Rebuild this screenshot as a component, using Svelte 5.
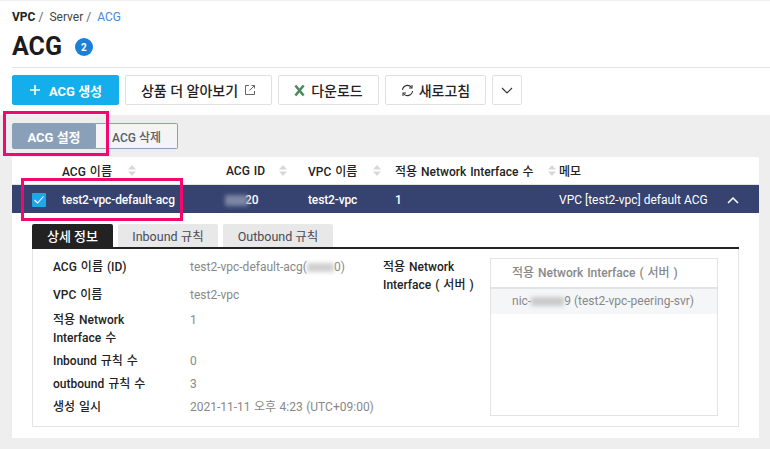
<script>
  const columns = [
    { label: 'ACG 이름', sort: true },
    { label: 'ACG ID', sort: true },
    { label: 'VPC 이름', sort: true },
    { label: '적용 Network Interface 수', sort: true },
    { label: '메모', sort: false }
  ];
  const tabs = ['상세 정보', 'Inbound 규칙', 'Outbound 규칙'];
</script>

<div class="page">
  <header class="top">
    <nav class="crumbs">
      <b>VPC</b><i>/</i><span>Server</span><i>/</i><span class="here">ACG</span>
    </nav>
    <div class="title">
      <h1>ACG</h1>
      <span class="count">2</span>
    </div>
  </header>

  <div class="toolbar">
    <button class="btn create">
      <svg width="12" height="12" viewBox="0 0 12 12"><path d="M6 1v10M1 6h10" stroke="#fff" stroke-width="1.6" fill="none" /></svg>
      <span>ACG 생성</span>
    </button>
    <button class="btn learn">
      <span>상품 더 알아보기</span>
      <svg width="12" height="12" viewBox="0 0 12 12" fill="none" stroke="#666" stroke-width="1"><path d="M5 1.5H1.5v9h9V7" /><path d="M5.5 6.500 10.500 1.500M7.500 1.500h3v3" /></svg>
    </button>
    <button class="btn download">
      <svg width="11" height="13" viewBox="0 0 12 13" fill="none" stroke="#4c8a5c" stroke-width="2.8"><path d="M1.500 1 10.500 12M10.500 1 1.500 12" /></svg>
      <span>다운로드</span>
    </button>
    <button class="btn refresh">
      <svg width="13" height="13" viewBox="0 0 13 13" fill="none" stroke="#333" stroke-width="1.1"><path d="M1.500 6A5 5 0 0 1 10.500 3.500" /><path d="M11.500 7A5 5 0 0 1 2.500 9.500" /><path d="M11 1v3H8M2 12V9h3" /></svg>
      <span>새로고침</span>
    </button>
    <button class="btn more">
      <svg width="12" height="7" viewBox="0 0 12 7" fill="none" stroke="#333" stroke-width="1.1"><path d="M1 1l5 5 5-5" /></svg>
    </button>
  </div>

  <main class="work">
    <div class="actions">
      <button class="act on">ACG 설정</button>
      <button class="act">ACG 삭제</button>
    </div>

    <section class="card">
      <div class="grid head">
        <span></span>
        {#each columns as col}
          <span class="th">
            <span class="th-label">{col.label}</span>
            {#if col.sort}
              <svg class="sort" width="8" height="11" viewBox="0 0 8 11" fill="#d6d8db"><path d="M4 0l4 4.500H0zM4 11 0 6.500h8z" /></svg>
            {/if}
          </span>
        {/each}
      </div>

      <div class="grid row">
        <span class="check">
          <svg width="10" height="8" viewBox="0 0 10 8" fill="none" stroke="#fff" stroke-width="1.1"><path d="M.5 4l3 3 6-6.500" /></svg>
        </span>
        <span class="name">test2-vpc-default-acg</span>
        <span><span class="blur dark"></span>20</span>
        <span>test2-vpc</span>
        <span>1</span>
        <span class="memo">
          VPC [test2-vpc] default ACG
          <svg width="12" height="7" viewBox="0 0 12 7" fill="none" stroke="#fff" stroke-width="1.500"><path d="M1 6l5-5 5 5" /></svg>
        </span>
      </div>

      <div class="detail">
        <div class="tabs">
          {#each tabs as tab, i}
            <span class="tab" class:active={i === 0}>{tab}</span>
          {/each}
        </div>

        <div class="panel">
          <dl class="info">
            <dt>ACG 이름 (ID)</dt>
            <dd>test2-vpc-default-acg(<span class="blur light"></span>0)</dd>
            <dt>VPC 이름</dt>
            <dd>test2-vpc</dd>
            <dt>적용 Network Interface 수</dt>
            <dd>1</dd>
            <dt>Inbound 규칙 수</dt>
            <dd>0</dd>
            <dt>outbound 규칙 수</dt>
            <dd>3</dd>
            <dt>생성 일시</dt>
            <dd>2021-11-11 오후 4:23 (UTC+09:00)</dd>
          </dl>

          <div class="nic-label">적용 Network Interface ( 서버 )</div>

          <div class="nic-box">
            <div class="nic-head">적용 Network Interface ( 서버 )</div>
            <div class="nic-row">nic-<span class="blur nic"></span>9 (test2-vpc-peering-svr)</div>
          </div>
        </div>
      </div>
    </section>
  </main>

  <div class="mark mark-a"></div>
  <div class="mark mark-b"></div>
</div>

<style>
  :global(body) {
    margin: 0;
    background: #fff;
  }

  .page {
    position: relative;
    width: 770px;
    height: 449px;
    overflow: hidden;
    font-family: Roboto, "Noto Sans CJK KR", sans-serif;
    font-size: 12px;
    color: #222;
    box-sizing: border-box;
    border-top: 1px solid #eee;
  }

  button {
    font-family: inherit;
    cursor: pointer;
  }

  .top {
    height: 66px;
    margin: 0 0 0 12px;
    border-bottom: 1px solid #e3e3e3;
    box-sizing: content-box;
  }

  .crumbs {
    display: flex;
    align-items: center;
    height: 14px;
    padding-top: 9px;
    line-height: 14px;
    color: #444;
  }

  .crumbs b {
    font-weight: 700;
    color: #222;
  }

  .crumbs i {
    font-style: normal;
    color: #666;
    margin: 0 6px 0 3px;
  }

  .crumbs .here {
    color: #4a86d8;
  }

  .title {
    display: flex;
    align-items: center;
    gap: 13px;
    margin-top: 7px;
    height: 32px;
  }

  h1 {
    margin: 0;
    font-size: 25px;
    font-weight: 700;
    color: #1c1c1c;
    line-height: 32px;
  }

  .count {
    width: 18px;
    height: 18px;
    border-radius: 50%;
    background: #1c7fd8;
    color: #fff;
    font-size: 10px;
    font-weight: 700;
    display: flex;
    align-items: center;
    justify-content: center;
  }

  .toolbar {
    display: flex;
    gap: 6px;
    height: 30px;
    padding: 7px 0 10px 12px;
  }

  .btn {
    height: 30px;
    padding: 0;
    display: flex;
    align-items: center;
    justify-content: center;
    gap: 6px;
    background: #fff;
    border: 1px solid #e0e0e0;
    border-radius: 2px;
    font-size: 14px;
    font-weight: 500;
    color: #222;
    box-sizing: border-box;
  }

  .create {
    width: 107px;
    gap: 8px;
    background: #14aeec;
    border-color: #14aeec;
    color: #fff;
    font-size: 13px;
    font-weight: 700;
  }

  .learn { width: 147px; }
  .download { width: 101px; gap: 6px; }
  .refresh { width: 101px; gap: 5px; }
  .more { width: 30px; }

  .work {
    background: #eeeeee;
    height: 334px;
    padding: 8px 11px 0 12px;
    box-sizing: border-box;
  }

  .actions {
    display: flex;
    height: 26px;
    margin-bottom: 8px;
  }

  .act {
    width: 82px;
    padding: 0;
    background: #f4f4f4;
    border: 1px solid #8a9fb8;
    border-left: none;
    border-radius: 0 2px 2px 0;
    font-size: 12px;
    font-weight: 500;
    color: #555e6a;
  }

  .act.on {
    width: 84px;
    background: #8a9fb8;
    border: 1px solid #8a9fb8;
    border-radius: 2px 0 0 2px;
    font-size: 13px;
    color: #fff;
    font-weight: 700;
  }

  .card {
    background: #fff;
    height: 281px;
    border-radius: 2px 2px 0 0;
  }

  .grid {
    display: grid;
    grid-template-columns: 50px 164px 82px 87px 164px 1fr;
    align-items: center;
  }

  .head {
    height: 27px;
    border-bottom: 1px solid #e4e4e4;
    font-weight: 500;
    color: #222;
  }

  .th {
    display: flex;
    align-items: center;
    white-space: nowrap;
  }

  .th-label {
    word-spacing: 1px;
  }

  .th:nth-child(2) .th-label { margin-right: 16px; }
  .th:nth-child(3) .th-label { margin-right: 14px; }
  .th:nth-child(4) .th-label { margin-right: 16px; }
  .th:nth-child(5) .th-label { margin-right: 15px; }

  .sort {
    flex: none;
  }

  .row {
    height: 28px;
    padding-top: 2px;
    box-sizing: border-box;
    background: #36426f;
    color: #fff;
    font-weight: 500;
    letter-spacing: -0.14px;
  }

  .check {
    width: 14px;
    height: 14px;
    margin-left: 20px;
    border-radius: 1px;
    background: #1fa8e8;
    display: flex;
    align-items: center;
    justify-content: center;
  }

  .memo {
    display: flex;
    align-items: center;
    justify-content: space-between;
    padding-right: 20px;
    font-weight: 400;
    letter-spacing: 0;
  }

  .blur {
    display: inline-block;
    vertical-align: middle;
    filter: blur(2px);
  }

  .blur.dark {
    width: 23px;
    height: 11px;
    margin: 0 -3px 0 -1px;
    background: #7d86a3;
  }

  .blur.light {
    width: 27px;
    height: 9px;
    background: #cfcfcf;
  }

  .blur.nic {
    width: 33px;
    height: 9px;
    background: #c9c9c9;
  }

  .detail {
    padding: 11px 20px 0;
  }

  .tabs {
    display: flex;
    gap: 5px;
    height: 23px;
    border-bottom: 2px solid #222;
  }

  .tab {
    width: 100px;
    display: flex;
    align-items: center;
    justify-content: center;
    background: #e8e8e8;
    border-radius: 2px 2px 0 0;
    color: #4a4a55;
    font-size: 12.5px;
  }

  .tab:nth-child(3) { width: 110px; }

  .tab.active {
    width: 81px;
    background: #222;
    color: #fff;
    font-size: 13px;
    font-weight: 500;
  }

  .panel {
    display: grid;
    grid-template-columns: 330px 107px 228px;
    align-items: start;
    height: 178px;
    padding-left: 20px;
    border: 1px solid #e3e3e3;
    border-top: none;
    box-sizing: border-box;
    padding-top: 9px;
  }

  .info {
    display: grid;
    grid-template-columns: 137px 1fr;
    margin: 0;
    line-height: 18px;
    white-space: nowrap;
    color: #888;
  }

  dt {
    font-weight: 500;
    color: #222;
    white-space: normal;
    width: 100px;
    padding-bottom: 5px;
    word-spacing: 1px;
  }

  dd {
    margin: 0;
    padding-bottom: 5px;
    word-spacing: 0.5px;
  }

  dt:nth-of-type(1), dd:nth-of-type(1) { padding-bottom: 10px; }
  dt:nth-of-type(2), dd:nth-of-type(2) { padding-bottom: 7px; }

  .nic-label {
    font-weight: 500;
    line-height: 18px;
    width: 100px;
    color: #222;
    word-spacing: 1px;
  }

  .nic-box {
    height: 158px;
    border: 1px solid #e3e3e3;
    box-sizing: border-box;
  }

  .nic-head {
    height: 30px;
    padding-left: 21px;
    line-height: 28px;
    font-weight: 500;
    color: #888;
    border-bottom: 2px solid #e3e3e3;
    box-sizing: border-box;
    word-spacing: 1px;
  }

  .nic-row {
    height: 25px;
    padding-left: 21px;
    line-height: 25px;
    background: #f5f6f8;
    color: #888;
  }

  .mark {
    position: absolute;
    border: 3px solid #f5076f;
    box-sizing: border-box;
  }

  .mark-a {
    left: 3px;
    top: 110px;
    width: 106px;
    height: 45px;
  }

  .mark-b {
    left: 21px;
    top: 177px;
    width: 162px;
    height: 43px;
  }
</style>
